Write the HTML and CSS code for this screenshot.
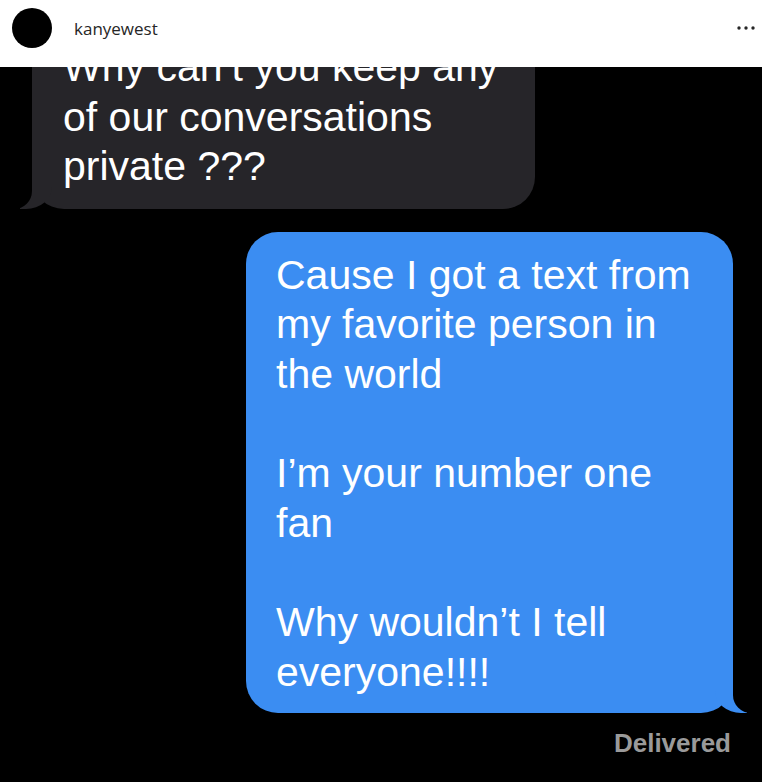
FILE: index.html
```html
<!DOCTYPE html>
<html>
<head>
<meta name="viewport" content="width=device-width, initial-scale=1">
<link rel="stylesheet" href="styles.css">
</head>
<body>

<header class="top">
  <div class="user">
    <span class="avatar"></span>
    <span class="name">kanyewest</span>
  </div>
  <svg class="more" width="18" height="6" viewBox="0 0 18 6">
    <circle cx="2" cy="3" r="1.7" fill="#262626"/>
    <circle cx="9" cy="3" r="1.7" fill="#262626"/>
    <circle cx="16" cy="3" r="1.7" fill="#262626"/>
  </svg>
</header>

<main class="chat">
  <div class="bubble them">Why can’t you keep any<br>of our conversations<br>private ???</div>
  <div class="bubble me">Cause I got a text from<br>my favorite person in<br>the world<br><br>I’m your number one<br>fan<br><br>Why wouldn’t I tell<br>everyone!!!!</div>
  <div class="status">Delivered</div>
</main>

</body>
</html>
```

FILE: styles.css
```css
body {
  margin: 0;
  background: #000;
  font-family: "Liberation Sans", Arial, sans-serif;
}

.top {
  height: 67px;
  box-sizing: border-box;
  padding: 8px 7px 0 12px;
  background: #fff;
  display: flex;
  align-items: flex-start;
  justify-content: space-between;
  position: relative;
  z-index: 1;
}

.user {
  display: flex;
  align-items: center;
  gap: 22px;
}

.avatar {
  width: 40px;
  height: 40px;
  border-radius: 50%;
  background: #000;
}

.name {
  font-family: "Open Sans", sans-serif;
  font-size: 17px;
  color: #262626;
}

.more {
  margin-top: 17px;
}

.chat {
  display: flex;
  flex-direction: column;
  overflow: hidden;
}

.bubble {
  position: relative;
  box-sizing: border-box;
  padding: 17px 0 17px 31px;
  border-radius: 32px;
  font-size: 41px;
  line-height: 49.5px;
  color: #fff;
}

.bubble::before,
.bubble::after {
  content: "";
  position: absolute;
  bottom: 0;
  height: 40px;
}

/* received message, grey, tail on the left */
.them {
  width: 503px;
  margin: -41px 0 0 32px;
  background: #262529;
}

.them::before {
  left: -12px;
  width: 32px;
  background: #262529;
  border-bottom-right-radius: 26px 22px;
}

.them::after {
  left: -44px;
  width: 44px;
  background: #000;
  border-bottom-right-radius: 18px;
}

/* sent message, blue, tail on the right */
.me {
  width: 487px;
  margin: 23px 0 0 246px;
  padding: 19px 0 15px 30px;
  line-height: 49.7px;
  background: #3b8df2;
}

.me::before {
  right: -14px;
  width: 32px;
  background: #3b8df2;
  border-bottom-left-radius: 26px 22px;
}

.me::after {
  right: -44px;
  width: 44px;
  background: #000;
  border-bottom-left-radius: 18px;
}

.status {
  align-self: flex-end;
  margin: 15px 31px 0 0;
  font-size: 26px;
  line-height: 30px;
  font-weight: bold;
  color: #9a9a9a;
}
```
